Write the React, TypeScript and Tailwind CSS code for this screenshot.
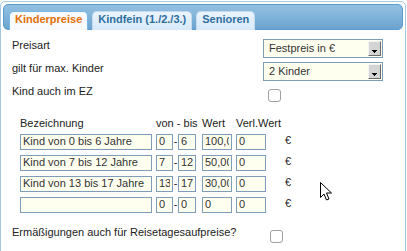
import React from "react";

type TabProps = { label: string; active?: boolean };

function Tab({ label, active }: TabProps) {
    return (
        <div
            className={`-mb-px h-[19px] rounded-t-[5px] border border-b-0 px-[5px] pt-[1px] font-bold leading-[12px] ${
                active
                    ? "border-[#79b7e7] bg-[#f8fafb] text-[#e17009]"
                    : "border-[#c5dbec] bg-linear-to-b from-[#eaf4fd] to-[#d6e9f9] text-[#2e6e9e]"
            }`}
        >
            {label}
        </div>
    );
}

function Select({ value }: { value: string }) {
    return (
        <div className="flex h-[19px] w-[120px] items-center border border-[#7f9db9] bg-[#fffff0] pl-[5px] pr-px text-[#333]">
            <span className="flex-1 leading-[13px]">{value}</span>
            {/* arrow button */}
            <div className="h-[15px] w-[13px] border-t border-l border-t-[#f4f4f4] border-l-[#f4f4f4] border-r border-b border-r-[#6a6a6a] border-b-[#6a6a6a] bg-[#d4d4d4]">
                <svg width="11" height="13" viewBox="0 0 11 13" shapeRendering="crispEdges">
                    <path d="M3 8 H8 V9 H7 V10 H6 V11 H5 V10 H4 V9 H3 Z" fill="#000" />
                </svg>
            </div>
        </div>
    );
}

function Check({ className }: { className: string }) {
    return (
        <input
            type="checkbox"
            readOnly
            className={`h-[13px] w-[13px] appearance-none rounded-[3px] border border-[#a0a0a0] bg-white ${className}`}
        />
    );
}

type Row = { name: string; from: string; to: string; value: string; verl: string };

const rows: Row[] = [
    { name: "Kind von 0 bis 6 Jahre", from: "0", to: "6", value: "100,00", verl: "0" },
    { name: "Kind von 7 bis 12 Jahre", from: "7", to: "12", value: "50,00", verl: "0" },
    { name: "Kind von 13 bis 17 Jahre", from: "13", to: "17", value: "30,00", verl: "0" },
    { name: "", from: "0", to: "0", value: "0", verl: "0" },
];

const field =
    "h-[16px] border border-[#7f9db9] bg-[#fffff0] px-[2px] pb-[2px] text-[11px] leading-none text-[#333] outline-none";

export default function App() {
    return (
        <div className="relative h-[251px] w-[407px] overflow-hidden bg-white font-['Liberation_Sans',Arial,sans-serif] text-[11px] text-[#222]">
            <div className="mt-px h-[270px] w-[406px] rounded-[5px] border border-[#a6c9e2] bg-white p-[2px]">
                {/* Tab bar */}
                <div className="flex h-[26px] items-end gap-[4px] rounded-[5px] border border-[#5a9bd2] bg-linear-to-b from-[#93c0e1] via-[#80b3da] to-[#6aa3cf] pl-[5px]">
                    <Tab label="Kinderpreise" active />
                    <Tab label="Kindfein (1./2./3.)" />
                    <Tab label="Senioren" />
                </div>

                {/* Content */}
                <div className="pl-[9px] pt-[9px]">
                    <div className="flex">
                        <span className="w-[251px] leading-[13px]">Preisart</span>
                        <Select value="Festpreis in €" />
                    </div>
                    <div className="mt-[4px] flex">
                        <span className="w-[251px] leading-[13px]">gilt für max. Kinder</span>
                        <Select value="2 Kinder" />
                    </div>
                    <div className="mt-[4px] flex">
                        <span className="w-[256px] leading-[13px]">Kind auch im EZ</span>
                        <Check className="mt-[4px]" />
                    </div>

                    {/* Table */}
                    <div className="mt-[15px] pl-[8px]">
                        <div className="flex leading-[13px]">
                            <span className="w-[136px]">Bezeichnung</span>
                            <span className="w-[46px]">von - bis</span>
                            <span className="w-[34px]">Wert</span>
                            <span>Verl.Wert</span>
                        </div>
                        <div className="mt-[4px] flex flex-col gap-[5px]">
                            {rows.map((r, i) => (
                                <div key={i} className="flex items-start">
                                    <input readOnly value={r.name} className={`${field} w-[132px]`} />
                                    <input readOnly value={r.from} className={`${field} ml-[4px] w-[17px]`} />
                                    <span className="w-[5px] text-center leading-[15px]">-</span>
                                    <input readOnly value={r.to} className={`${field} w-[18px]`} />
                                    <input readOnly value={r.value} className={`${field} ml-[6px] w-[30px]`} />
                                    <input readOnly value={r.verl} className={`${field} ml-[4px] w-[30px]`} />
                                    <span className="ml-[19px] leading-[13px]">€</span>
                                </div>
                            ))}
                        </div>
                    </div>

                    <div className="mt-[13px] flex">
                        <span className="w-[258px] leading-[13px]">
                            Ermäßigungen auch für Reisetagesaufpreise?
                        </span>
                        <Check className="mt-[4px]" />
                    </div>
                </div>
            </div>

            {/* mouse pointer */}
            <svg className="absolute left-[319px] top-[181px]" width="14" height="21" viewBox="0 0 14 21">
                <path
                    d="M1.5 1.5 V16.5 L5 13 L7.5 19 L10 18 L7.5 12 H12.5 Z"
                    fill="#fff"
                    stroke="#000"
                    strokeWidth="1"
                    strokeLinejoin="miter"
                />
            </svg>
        </div>
    );
}
